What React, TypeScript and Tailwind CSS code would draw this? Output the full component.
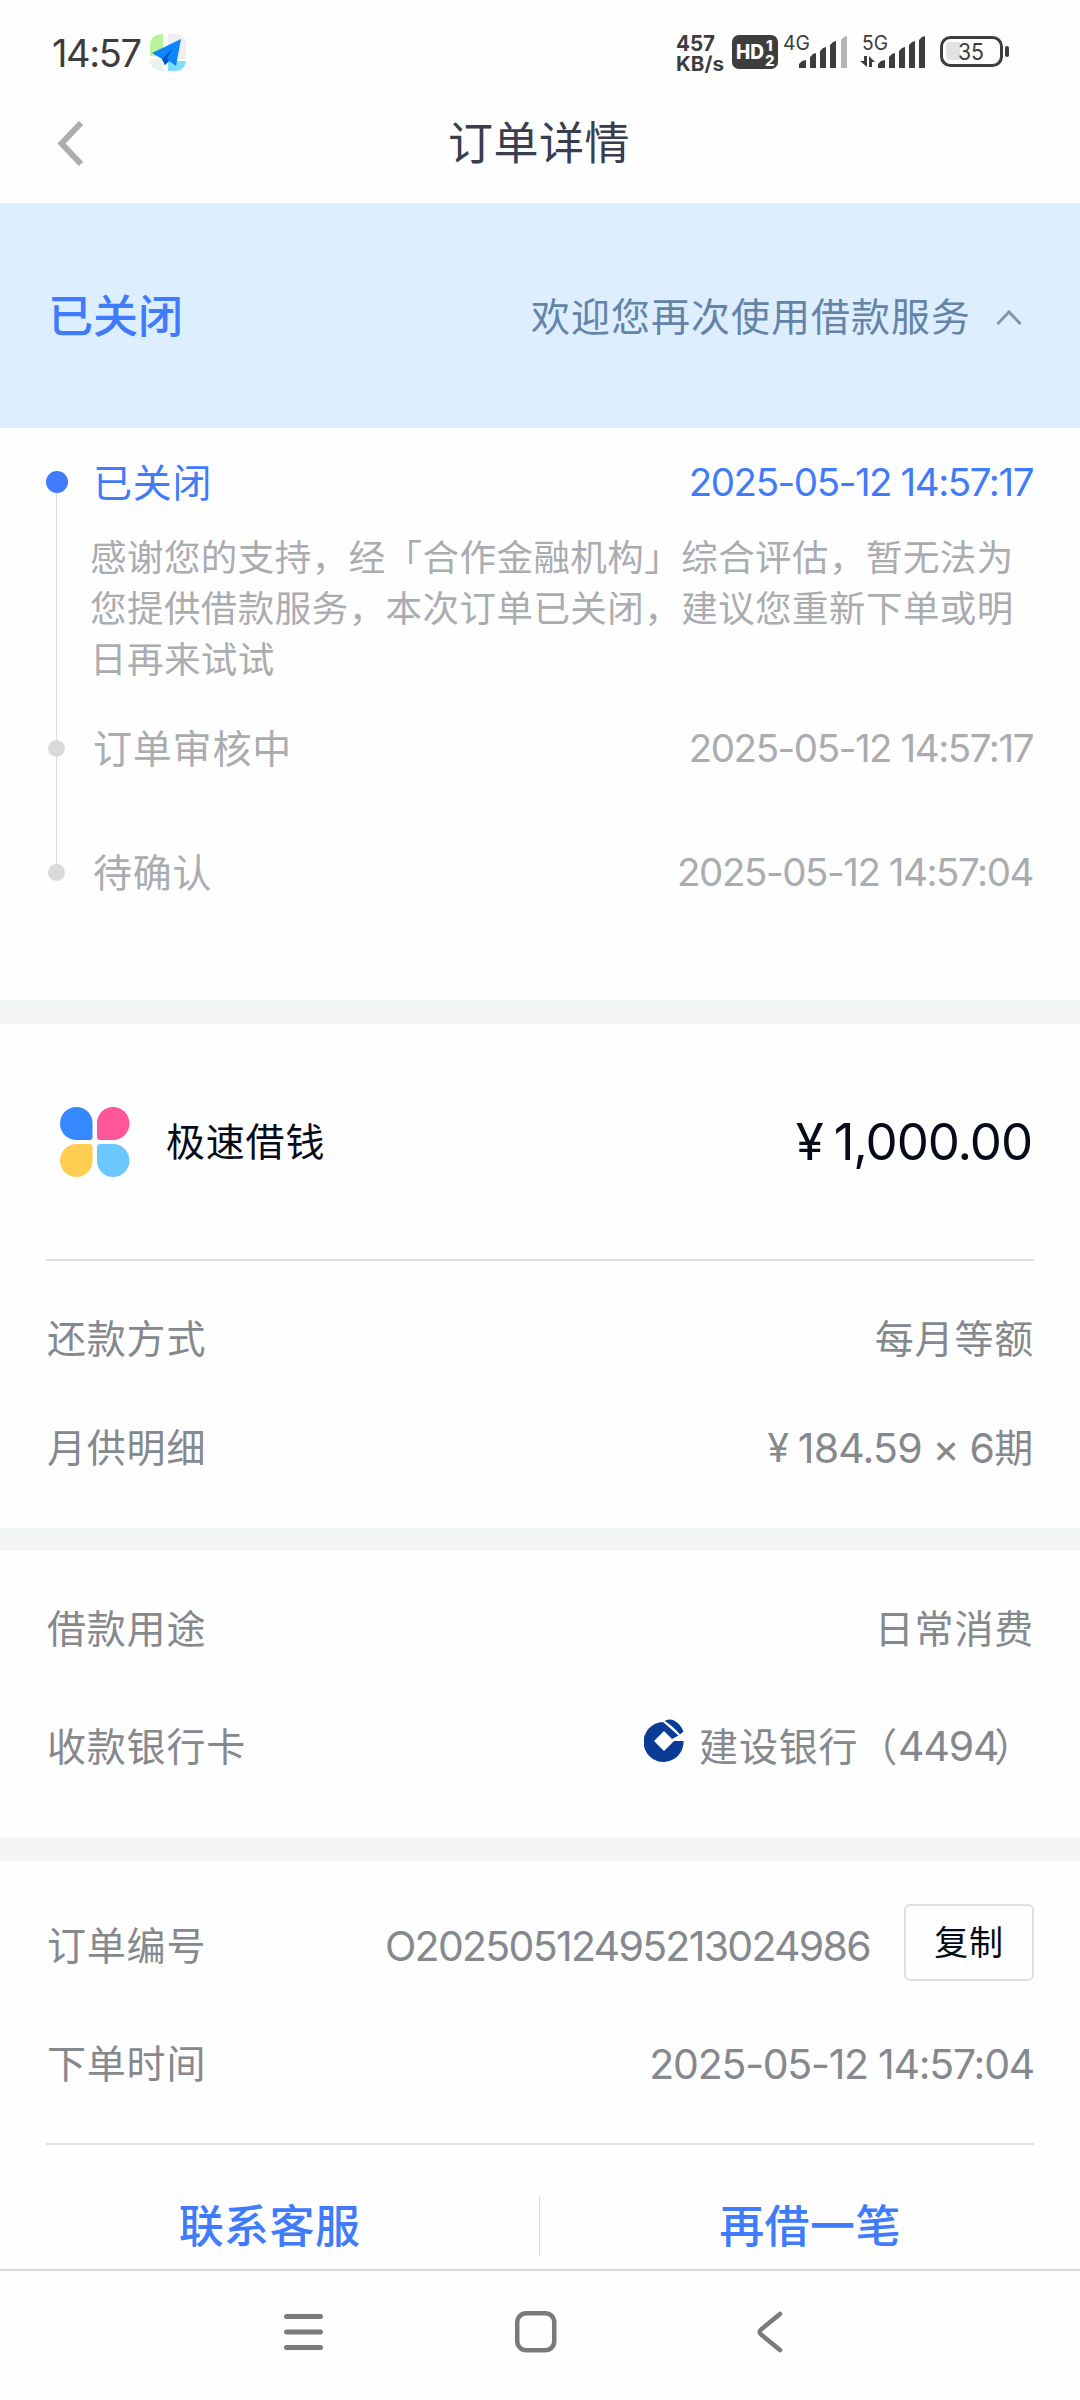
import React from "react";

const INK = "#3d3d3d";

function StatusBar() {
  return (
    <div className="flex h-[86px] items-center pt-[20px] pl-[52px] pr-[70px] text-[#3d3d3d]">
      <span className="w-[97px] text-[38px] leading-none tracking-[-1.4px]">14:57</span>
      <svg width="38" height="40" viewBox="0 0 38 40">
        <path d="M14 1v22H1V13Q1 1 14 1Z" fill="#b9f49a" />
        <path d="M19 1h7q11 0 11 12v13H19Z" fill="#eceef0" />
        <path d="M1 26h13v12Q1 38 1 26Z" fill="#e6f3ee" />
        <path d="M19 28h18q-1 10-11 10h-7Z" fill="#7fdcff" />
        <path d="M32 6 3 20l10 6 3 6 4-4 7 5Z" fill="#0b86fb" />
        <path d="m13 26 3 6 4-4-2-3 6-10Z" fill="#0558c4" />
      </svg>
      <div className="ml-auto flex items-center">
        <svg width="56" height="44" viewBox="0 0 56 44" fill={INK} fontFamily="Inter, sans-serif" fontWeight="700">
          <text x="0" y="20" fontSize="22" textLength="39" lengthAdjust="spacingAndGlyphs">457</text>
          <text x="0" y="40" fontSize="20" textLength="48" lengthAdjust="spacingAndGlyphs">KB/s</text>
        </svg>
        <svg width="52" height="44" viewBox="0 0 52 44" fontFamily="Inter, sans-serif" fontWeight="800" fill="#fff">
          <rect x="0" y="4" width="46" height="34" rx="7" fill={INK} />
          <text x="4" y="28" fontSize="20" textLength="28" lengthAdjust="spacingAndGlyphs">HD</text>
          <text x="34" y="20" fontSize="15" textLength="6">1</text>
          <text x="33" y="35" fontSize="15" textLength="9">2</text>
        </svg>
        <svg width="76" height="44" viewBox="0 0 76 44" fill={INK}>
          <text x="-1" y="19" fontSize="20" fontFamily="Inter, sans-serif" textLength="27" lengthAdjust="spacingAndGlyphs">4G</text>
          <path d="M15 37v-4l3-3 4-1v8ZM26 37V26l3-3 3-1v15ZM36 37V20l3-3 3-1v21ZM46 37V14l3-3 3-1v27Z" />
          <path d="M57 37V9l3-3 3-1v32Z" fill="#b4b4b4" />
        </svg>
        <svg width="80" height="44" viewBox="0 0 80 44" fill={INK}>
          <text x="2" y="19" fontSize="20" fontFamily="Inter, sans-serif" textLength="26" lengthAdjust="spacingAndGlyphs">5G</text>
          <path d="M4 25h3v11L0 30h4ZM9 36V25l6 6h-3v5Z" />
          <path d="M18 37v-4l3-3 4-1v8ZM29 37V26l3-3 3-1v15ZM39 37V20l3-3 3-1v21ZM49 37V14l3-3 3-1v27ZM59 37V9l3-3 3-1v32Z" />
        </svg>
        <svg width="70" height="44" viewBox="0 0 70 44" fill={INK}>
          <rect x="1.500" y="6.500" width="60" height="28" rx="9" fill="none" stroke={INK} strokeWidth="3" />
          <path d="M10 11h10v18H10q-4 0-4-4v-10q0-4 4-4Z" fill="#e2e2e2" />
          <text x="18" y="29" fontSize="23" fontFamily="Inter, sans-serif" textLength="26" lengthAdjust="spacingAndGlyphs">35</text>
          <rect x="65" y="15" width="4" height="11" rx="2" />
        </svg>
      </div>
    </div>
  );
}

function TitleBar() {
  return (
    <div className="grid h-[117px] grid-cols-3 items-center pb-[2px] pl-[54px] pr-[56px]">
      <svg className="-mt-[3px]" width="32" height="48" viewBox="0 0 32 48" fill="none" stroke="#adadb1" strokeWidth="6">
        <path d="M27 5 7.500 25.500 27 46" />
      </svg>
      <h1 className="text-center text-[45px] leading-none tracking-[0.5px] text-[#3a3d4d]">订单详情</h1>
    </div>
  );
}

function Row({ label, children, className }: { label: string; children: React.ReactNode; className: string }) {
  return (
    <div className={`flex items-center justify-between text-[39px] leading-[48px] tracking-[0.8px] text-[#85888d] ${className}`}>
      <span className="pl-px">{label}</span>
      {children}
    </div>
  );
}

function Step({ label, time, active }: { label: string; time: string; active?: boolean }) {
  return (
    <div className={`flex h-[48px] items-center text-[39px] leading-[48px] tracking-[0.8px] ${active ? "text-[#3f7bfa]" : "text-[#aaacb0]"}`}>
      <span className="flex w-[21px] justify-center">
        <i className={active ? "size-[22px] shrink-0 rounded-full bg-[#3f7bfa]" : "size-[17px] rounded-full bg-[#dadada]"} />
      </span>
      <span className="ml-[26px] pt-[2px]">{label}</span>
      <span className="ml-auto text-[38.5px] tracking-[-1.45px]">{time}</span>
    </div>
  );
}

function Gap() {
  return <div className="h-[24px] shrink-0 bg-[#f4f6f6]" />;
}

export default function App() {
  return (
    <div className="flex h-[2400px] w-[1080px] flex-col overflow-hidden bg-[#fefefe] font-['Inter','Noto_Sans_CJK_SC',sans-serif]">
      <StatusBar />
      <TitleBar />

      <div className="flex h-[225px] items-center bg-[#ddeffe] pt-[2px] pl-[48px] pr-[58px]">
        <span className="text-[45px] leading-none font-medium text-[#3f7bfa]">已关闭</span>
        <span className="ml-auto text-[39px] leading-none tracking-[1px] text-[#6483a8]">欢迎您再次使用借款服务</span>
        <svg className="ml-[25px]" width="26" height="18" viewBox="0 0 26 18" fill="none" stroke="#8496a5" strokeWidth="3">
          <path d="M1.500 16 13 4l11.500 12" />
        </svg>
      </div>

      <section className="relative h-[572px] pt-[30px] pl-[46px] pr-[47px]">
        <div className="absolute top-[54px] left-[56px] h-[390px] w-[1px] bg-[#dcdcdc]" />
        <div className="relative">
          <Step label="已关闭" time="2025-05-12 14:57:17" active />
          <p className="mt-[27px] ml-[44px] h-[153px] w-[930px] text-[36.500px] leading-[51px] tracking-[0.450px] text-[#aaacb0]">
            感谢您的支持，经「合作金融机构」综合评估，暂无法为
            <br />
            您提供借款服务，本次订单已关闭，建议您重新下单或明
            <br />
            日再来试试
          </p>
          <div className="mt-[38px]">
            <Step label="订单审核中" time="2025-05-12 14:57:17" />
          </div>
          <div className="mt-[76px]">
            <Step label="待确认" time="2025-05-12 14:57:04" />
          </div>
        </div>
      </section>

      <Gap />

      <section className="h-[504px] px-[46px]">
        <div className="flex h-[237px] items-center border-b-2 border-[#e0e1e3] text-[#060b1a]">
          <svg className="ml-[14px]" width="70" height="70" viewBox="0 0 70 70">
            <path d="M16.500 0A16 16 0 0 1 32.500 16.500V30a3 3 0 0 1-3 3H16.500A16.500 16.500 0 0 1 16.500 0Z" fill="#3688ff" />
            <path d="M53 0A16.500 16.500 0 0 1 53 33H40a3 3 0 0 1-3-3V16.500A16 16 0 0 1 53 0Z" fill="#ff5599" />
            <path d="M16.500 37H29.500a3 3 0 0 1 3 3V53.500A16 16 0 0 1 16.500 70A16.500 16.500 0 0 1 16.500 37Z" fill="#ffcd52" />
            <path d="M40 37H53A16.500 16.500 0 0 1 53 70A16 16 0 0 1 37 53.500V40a3 3 0 0 1 3-3Z" fill="#6cc7ff" />
          </svg>
          <span className="ml-[36px] text-[39px] leading-none tracking-[0.8px]">极速借钱</span>
          <span className="ml-auto flex items-center pr-[2px] text-[51px] leading-none tracking-[-1.100px]">
            <span className="mr-[11px]">¥</span>1,000.00
          </span>
        </div>
        <Row label="还款方式" className="mt-[54px]">
          <span>每月等额</span>
        </Row>
        <Row label="月供明细" className="mt-[61px]">
          <span className="flex">
            <span className="mr-[8px]">¥</span>
            <span className="text-[41px] tracking-[-0.800px]">184.59 × 6</span>
            <span>期</span>
          </span>
        </Row>
      </section>

      <div className="h-[23px] shrink-0 bg-[#f4f6f6]" />

      <section className="h-[286px] px-[46px] pt-[54px]">
        <Row label="借款用途" className="">
          <span>日常消费</span>
        </Row>
        <Row label="收款银行卡" className="mt-[69px]">
          <span className="flex items-center">
            <svg className="mr-[14px] -mt-[13px]" width="41" height="43" viewBox="0 0 41 43" fill="#0a3c97">
              <path d="M19 3A20 20 0 1 0 39.500 22H30L20 32 10 22 20 12 28 20 34.500 16.500Z" />
              <path d="M20.500 2Q26-.5 30 1.500 37 5.500 39.500 12.500L36 15.500Q28 6 20.500 2Z" />
            </svg>
            <span>
              建设银行（<span className="-mr-[4px] text-[41px] tracking-[-1.200px]">4494</span>）
            </span>
          </span>
        </Row>
      </section>

      <Gap />

      <section className="h-[408px]">
        <div className="mx-[46px] h-[284px] border-b-2 border-[#e0e1e3] pt-[43px]">
          <div className="flex h-[77px] items-center text-[39px] leading-[48px] text-[#85888d]">
            <span className="pt-[7px] pl-px tracking-[0.8px]">订单编号</span>
            <span className="ml-auto mr-[34px] pt-[6px] text-[41px] tracking-[-1.700px]">O20250512495213024986</span>
            <button className="h-[77px] w-[130px] rounded-[6px] border-2 border-[#dfe0e2] text-[34px] leading-none tracking-[0.8px] text-[#060b1a]">复制</button>
          </div>
          <Row label="下单时间" className="mt-[59px]">
            <span className="text-[41px] tracking-[-1.250px]">2025-05-12 14:57:04</span>
          </Row>
        </div>
        <div className="mt-[51px] grid h-[60px] grid-cols-2 divide-x divide-[#dcdcdc] text-[45px] leading-[60px] font-medium tracking-[0.4px] text-[#3f7bfa]">
          <button className="pt-px">联系客服</button>
          <button className="pt-px">再借一笔</button>
        </div>
      </section>

      <nav className="flex flex-1 items-start border-t-2 border-[#d9d9d9] pt-[38px]">
        <svg className="ml-[282px]" width="44" height="46" viewBox="0 0 44 46" stroke="#7a7a7a" strokeWidth="5" strokeLinecap="round">
          <path d="M4.500 7.500h34M4.500 23h34M4.500 38.500h34" />
        </svg>
        <svg className="ml-[187px]" width="46" height="46" viewBox="0 0 46 46" fill="none" stroke="#7a7a7a" strokeWidth="4.500">
          <rect x="4.250" y="4.250" width="37" height="37" rx="9" />
        </svg>
        <svg className="ml-[195px]" width="32" height="46" viewBox="0 0 32 46" fill="none" stroke="#7a7a7a" strokeWidth="4.500" strokeLinecap="round" strokeLinejoin="round">
          <path d="M26 5 7 20.500Q4.500 23 7 25.500L26 41" />
        </svg>
      </nav>
    </div>
  );
}
